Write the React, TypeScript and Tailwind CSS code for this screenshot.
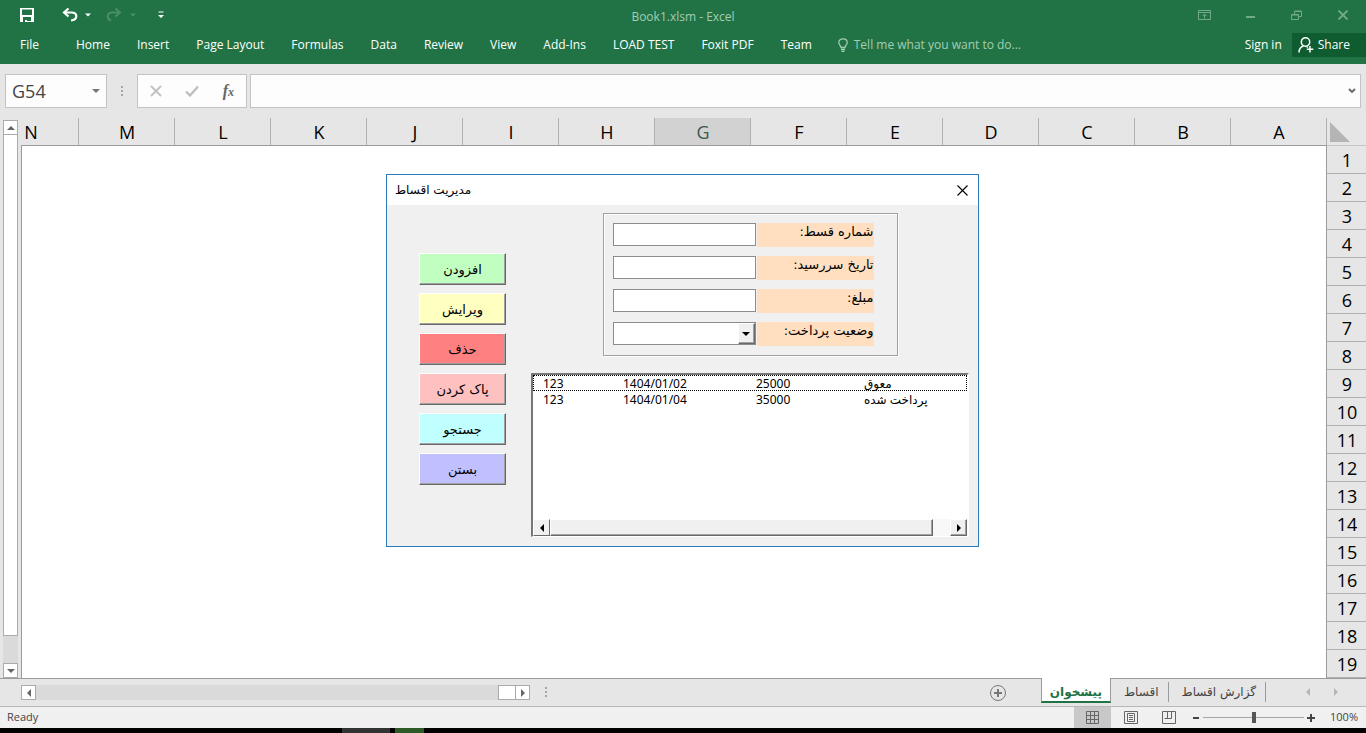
import { useState } from 'react';
import type { ReactNode } from 'react';
import clsx from 'clsx';

const MENU = ['Home', 'Insert', 'Page Layout', 'Formulas', 'Data', 'Review', 'View', 'Add-Ins', 'LOAD TEST', 'Foxit PDF', 'Team'];
const COLUMNS = ['N', 'M', 'L', 'K', 'J', 'I', 'H', 'G', 'F', 'E', 'D', 'C', 'B', 'A'];
const ROWS = Array.from({ length: 19 }, (_, i) => i + 1);
const SHEETS = ['پیشخوان', 'اقساط', 'گزارش اقساط'];

const ACTIONS = [
  { label: 'افزودن', color: 'bg-[#c0ffc0]' },
  { label: 'ویرایش', color: 'bg-[#ffffc0]' },
  { label: 'حذف', color: 'bg-[#ff8080]' },
  { label: 'پاک کردن', color: 'bg-[#ffc0c0]' },
  { label: 'جستجو', color: 'bg-[#c0ffff]' },
  { label: 'بستن', color: 'bg-[#c0c0ff]' },
];

const INSTALLMENTS = [
  { id: '123', due: '1404/01/02', amount: '25000', status: 'معوق' },
  { id: '123', due: '1404/01/04', amount: '35000', status: 'پرداخت شده' },
];

type Direction = 'up' | 'down' | 'left' | 'right';

const ARROWS: Record<Direction, string> = {
  up: 'M0 6 L4 2 L8 6 Z',
  down: 'M0 2 L8 2 L4 6 Z',
  left: 'M6 0 L6 8 L2 4 Z',
  right: 'M2 0 L6 4 L2 8 Z',
};

function Arrow({ dir, className }: { dir: Direction; className?: string }) {
  return (
    <svg viewBox="0 0 8 8" className={clsx('shrink-0 fill-current', className ?? 'size-2')} aria-hidden="true">
      <path d={ARROWS[dir]} />
    </svg>
  );
}

function Dots() {
  return (
    <svg viewBox="0 0 2 12" className="h-3 w-[2px] fill-[#a6a6a6]" aria-hidden="true">
      <rect width="2" height="2" y="1" />
      <rect width="2" height="2" y="5" />
      <rect width="2" height="2" y="9" />
    </svg>
  );
}

function TitleBar() {
  return (
    <div className="relative flex h-8 items-center justify-between">
      <div className="flex h-[30px] items-center self-start pl-5">
        <button aria-label="Save">
          <svg viewBox="0 0 14 14" className="size-[14px]">
            <path d="M0 0h14v14H0z M2 1.500v5.500h10V1.500z M3 9v5h2v-2h2v2h4V9z" fill="#fff" fillRule="evenodd" />
            <path d="M0 13h3v1H0z M7 13h7v1H7z" fill="#fff" />
          </svg>
        </button>
        <button aria-label="Undo" className="ml-7">
          <svg viewBox="0 0 16 14" className="h-[14px] w-4" fill="none" stroke="#fff" strokeWidth="2.200">
            <path d="M2 4.500h7.500c3 0 4.800 1.600 4.800 3.800 0 2.400-2.300 3.900-5.300 4.200" />
            <path d="M6.500 0.500 2 4.500l4.500 4" />
          </svg>
        </button>
        <Arrow dir="down" className="ml-[7px] size-[6px] text-white" />
        <button aria-label="Redo" className="ml-[15px]">
          <svg viewBox="0 0 16 14" className="h-[14px] w-4" fill="none" stroke="#4a8f68" strokeWidth="2">
            <path d="M14 4.500H6.500c-3 0-4.800 1.600-4.800 3.800 0 2.400 1.300 3.600 3.300 4.200" />
            <path d="M9.500 0.500l4.500 4-4.500 4" />
          </svg>
        </button>
        <Arrow dir="down" className="ml-2 size-[6px] text-[#4a8f68]" />
        <button aria-label="Customize Quick Access Toolbar" className="ml-[21px]">
          <svg viewBox="0 0 8 8" className="size-2 fill-white">
            <path d="M1.500 0.500h5v1h-5z M1 4h6L4 7z" />
          </svg>
        </button>
      </div>

      <h1 className="absolute left-1/2 top-[5px] -translate-x-1/2 text-xs leading-6 text-[#a3cdb3]">Book1.xlsm - Excel</h1>

      <div className="flex h-[30px] items-center gap-[35px] self-start pr-[17px] text-[#72a98a]">
        <button aria-label="Ribbon Display Options">
          <svg viewBox="0 0 13 10" className="h-[10px] w-[13px]" fill="none" stroke="currentColor">
            <path d="M.5.5h12v9H.500z M.5 2.500h12 M6.500 8.500v-4 M4.500 6l2-2 2 2" />
          </svg>
        </button>
        <button aria-label="Minimize">
          <svg viewBox="0 0 10 10" className="size-[10px]">
            <path d="M0 6h9v2H0z" fill="currentColor" />
          </svg>
        </button>
        <button aria-label="Restore">
          <svg viewBox="0 0 11 10" className="h-[10px] w-[11px]" fill="none" stroke="currentColor">
            <path d="M.5 4.500h7v5h-7z M.5 5h7 M3.500 4V1.500h7v5H8 M3.500 1h7" />
          </svg>
        </button>
        <button aria-label="Close">
          <svg viewBox="0 0 12 10" className="h-[10px] w-3" fill="none" stroke="currentColor" strokeWidth="1.800">
            <path d="M1.500.5l9 9 M10.500.5l-9 9" />
          </svg>
        </button>
      </div>
    </div>
  );
}

function Ribbon() {
  return (
    <nav className="flex h-8 items-start text-xs text-white">
      <button className="ml-5 mr-[37px] h-[26px]">File</button>
      <div className="flex gap-[27px]">
        {MENU.map((item) => (
          <button key={item} className="h-[26px] whitespace-nowrap">{item}</button>
        ))}
      </div>
      <button className="ml-[26px] flex h-[26px] items-center gap-[6px] whitespace-nowrap text-[#a3cdb3]">
        <svg viewBox="0 0 10 14" className="h-[14px] w-[10px]" fill="none" stroke="currentColor" strokeWidth="1.300">
          <path d="M3 9.500C3 7.500.8 7 .8 4.500.8 2.300 2.700.8 5 .8s4.200 1.500 4.200 3.700C9.200 7 7 7.500 7 9.500z M3 11.500h4 M3.500 13.300h3" />
        </svg>
        Tell me what you want to do...
      </button>
      <div className="ml-auto flex items-center">
        <button className="mr-[10px] h-[26px]">Sign in</button>
        <button className="flex h-6 items-center gap-1 bg-[#0e5c2f] pl-[6px] pr-4">
          <svg viewBox="0 0 16 16" className="size-4" fill="none" stroke="#fff" strokeWidth="1.500">
            <circle cx="7.500" cy="5" r="4.200" />
            <path d="M5.500 9C2.500 10 1 12.300 1 15.500 M8.500 9.500l1.500 1 M12 9v6.500 M8.800 12.300h6.500" />
          </svg>
          Share
        </button>
      </div>
    </nav>
  );
}

function FormulaBar() {
  return (
    <div className="flex items-center px-[5px] pb-[10px] pt-[10px]">
      <div className="flex h-[34px] w-[102px] items-center border border-[#c3c3c3] bg-[#fdfdfd] pr-[6px]">
        <input
          aria-label="Name Box"
          defaultValue="G54"
          className="w-full min-w-0 bg-transparent pl-[6px] text-lg text-[#444] outline-none"
        />
        <button aria-label="Show names" className="text-[#777]"><Arrow dir="down" /></button>
      </div>
      <div className="mx-[14px]"><Dots /></div>
      <div className="flex h-[34px] w-[110px] shrink-0 items-center justify-between border border-[#c3c3c3] bg-[#fdfdfd] pl-3 pr-[10px]">
        <button aria-label="Cancel">
          <svg viewBox="0 0 12 12" className="size-3" fill="none" stroke="#c0c0c0" strokeWidth="1.800">
            <path d="M1 1l10 10 M11 1L1 11" />
          </svg>
        </button>
        <button aria-label="Enter">
          <svg viewBox="0 0 14 12" className="h-3 w-[14px]" fill="none" stroke="#c0c0c0" strokeWidth="2.400">
            <path d="M1 6.500l4 4L13 1.500" />
          </svg>
        </button>
        <button aria-label="Insert Function" className="pr-[2px] font-['Liberation_Serif',serif] text-base font-bold italic leading-4 text-[#666]">
          f<span className="text-xs">x</span>
        </button>
      </div>
      <div className="ml-[3px] flex h-[34px] flex-1 items-center border border-[#c3c3c3] bg-[#fdfdfd] pr-1">
        <input aria-label="Formula Bar" className="h-full min-w-0 flex-1 bg-transparent px-2 outline-none" />
        <button aria-label="Expand Formula Bar">
          <svg viewBox="0 0 8 6" className="h-[6px] w-2" fill="none" stroke="#666" strokeWidth="1.800">
            <path d="M1 1l3 3 3-3" />
          </svg>
        </button>
      </div>
    </div>
  );
}

function ScrollButton({ dir, label }: { dir: Direction; label: string }) {
  return (
    <button aria-label={label} className="flex size-[15px] shrink-0 items-center justify-center border border-[#ababab] bg-white text-[#666]">
      <Arrow dir={dir} />
    </button>
  );
}

function VerticalScroll() {
  return (
    <div className="flex w-[21px] shrink-0 flex-col pl-[3px] pt-[2px]">
      <ScrollButton dir="up" label="Scroll up" />
      <div className="w-[15px] flex-1 border border-t-0 border-[#ababab] bg-white" />
      <div className="h-[27px] w-[15px] bg-[#dadada]" />
      <ScrollButton dir="down" label="Scroll down" />
    </div>
  );
}

function Sheet() {
  return (
    <div className="flex min-w-0 flex-1">
      <div className="flex min-w-0 flex-1 flex-col">
        <div className="flex h-7 justify-end overflow-hidden border-b border-[#9b9b9b]">
          {COLUMNS.map((col) => (
            <div
              key={col}
              className={clsx(
                'flex w-24 shrink-0 items-center justify-center border-r border-[#b1b1b1] pl-px text-lg leading-7',
                col === 'G' ? 'bg-[#d2d2d2] text-[#3d5a4b]' : 'text-black',
              )}
            >
              {col}
            </div>
          ))}
        </div>
        <div className="flex-1 border-x border-[#9b9b9b] bg-white" />
      </div>
      <div className="w-[39px] shrink-0">
        <div className="flex h-7 items-end border-b border-[#c6c6c6] pb-[3px] pl-[3px]">
          <svg viewBox="0 0 20 20" className="size-5 fill-[#b5b5b5]" aria-hidden="true">
            <path d="M0 0v20h20z" />
          </svg>
        </div>
        {ROWS.map((row) => (
          <div key={row} className="h-7 border-b border-[#b1b1b1] pl-px text-center text-lg leading-7 text-black">
            {row}
          </div>
        ))}
      </div>
    </div>
  );
}

function Field({ id, label, children }: { id: string; label: string; children: ReactNode }) {
  return (
    <div className="flex h-6 items-start gap-px">
      {children}
      <label htmlFor={id} dir="rtl" className="h-6 w-[117px] bg-[#ffdfc0] text-right text-[13px] leading-[18px]">
        {label}
      </label>
    </div>
  );
}

const FIELD_BOX = 'h-[23px] w-[143px] border border-[#8c8c8c] bg-white';
const RAISED = 'border border-b-[#696969] border-l-white border-r-[#696969] border-t-white';

function ListScroll() {
  return (
    <div className="flex h-[17px] bg-[#f8f8f8]">
      <button aria-label="Scroll list left" className={clsx('flex w-[17px] items-center justify-center bg-[#f0f0f0]', RAISED)}>
        <Arrow dir="left" />
      </button>
      <div className={clsx('flex-1 bg-[#f0f0f0] shadow-[inset_-1px_-1px_0_#a0a0a0]', RAISED)} />
      <button aria-label="Scroll list right" className={clsx('ml-[17px] flex w-[17px] items-center justify-center bg-[#f0f0f0] shadow-[inset_-1px_-1px_0_#a0a0a0]', RAISED)}>
        <Arrow dir="right" />
      </button>
    </div>
  );
}

function InstallmentList() {
  const [selected, setSelected] = useState(0);

  return (
    <div className="mt-[17px] flex h-[164px] flex-col justify-between border-b border-l-2 border-r-2 border-t-2 border-b-white border-l-[#777] border-r-white border-t-[#777] bg-white">
      <table className="w-full table-fixed border-collapse text-left font-['Noto_Sans','DejaVu_Sans',sans-serif] text-xs">
        <tbody>
          {INSTALLMENTS.map((item, i) => (
            <tr
              key={item.due}
              onClick={() => setSelected(i)}
              className={clsx('h-4 leading-[14px] *:pt-[2px]', i === selected && 'outline-1 -outline-offset-1 outline-dotted outline-black')}
            >
              <td className="w-[90px] pl-[10px]">{item.id}</td>
              <td className="w-[133px]">{item.due}</td>
              <td className="w-[108px]">{item.amount}</td>
              <td>{item.status}</td>
            </tr>
          ))}
        </tbody>
      </table>
      <ListScroll />
    </div>
  );
}

function InstallmentDialog() {
  return (
    <section
      role="dialog"
      aria-labelledby="dialog-title"
      className="w-[593px] border border-[#2a7ab8] bg-[#f0f0f0] font-['DejaVu_Sans',sans-serif] text-black"
    >
      <header className="flex h-[30px] items-center justify-between bg-white pl-2 pr-[10px]">
        <h2 id="dialog-title" dir="rtl" className="text-xs">مدیریت اقساط</h2>
        <button aria-label="Close dialog">
          <svg viewBox="0 0 11 11" className="size-[11px]" stroke="#000" strokeWidth="1.100">
            <path d="M.5.5l10 10 M10.500.5l-10 10" />
          </svg>
        </button>
      </header>

      <div className="flex justify-between pb-[9px] pl-8 pr-[9px] pt-2">
        <div className="flex w-[87px] flex-col gap-2 pt-10">
          {ACTIONS.map(({ label, color }) => (
            <button key={label} className={clsx('h-8 pt-[2px] text-[13px] shadow-[inset_-1px_-1px_0_#a0a0a0]', RAISED, color)}>
              {label}
            </button>
          ))}
        </div>

        <div className="w-[438px]">
          <div className="mx-auto flex w-[295px] flex-col gap-[9px] border border-[#a0a0a0] py-[9px] pl-[9px] shadow-[inset_1px_1px_0_#fff,1px_1px_0_#fff]">
            <Field id="number" label="شماره قسط:">
              <input id="number" className={FIELD_BOX} />
            </Field>
            <Field id="due" label="تاریخ سررسید:">
              <input id="due" className={FIELD_BOX} />
            </Field>
            <Field id="amount" label="مبلغ:">
              <input id="amount" className={FIELD_BOX} />
            </Field>
            <Field id="status" label="وضعیت پرداخت:">
              <div className="relative">
                <select id="status" className={clsx('block appearance-none pl-1 text-xs', FIELD_BOX)}>
                  <option value=""></option>
                  <option>معوق</option>
                  <option>پرداخت شده</option>
                </select>
                <span className={clsx('pointer-events-none absolute inset-y-px right-px flex w-[17px] items-center justify-center bg-[#f0f0f0] shadow-[inset_-1px_-1px_0_#a0a0a0]', RAISED)}>
                  <Arrow dir="down" />
                </span>
              </div>
            </Field>
          </div>
          <InstallmentList />
        </div>
      </div>
    </section>
  );
}

function SheetTabs() {
  const [active, setActive] = useState(SHEETS[0]);

  return (
    <div className="flex h-7 shrink-0 border-t border-[#9b9b9b] pl-[21px]">
      <div className="mr-[15px] mt-[6px] flex h-[15px] w-[509px] bg-[#dadada]">
        <ScrollButton dir="left" label="Scroll left" />
        <div className="ml-auto w-[17px] border border-r-0 border-[#ababab] bg-white" />
        <ScrollButton dir="right" label="Scroll right" />
      </div>
      <div className="mt-[7px]"><Dots /></div>
      <button aria-label="New sheet" className="ml-auto mr-[34px] flex items-center">
        <svg viewBox="0 0 18 18" className="size-[18px]" fill="none" stroke="#777">
          <circle cx="9" cy="9" r="7.500" />
          <path d="M5 9h8 M9 5v8" strokeWidth="2" />
        </svg>
      </button>
      <div className="flex items-start font-['DejaVu_Sans',sans-serif] text-xs text-[#444]">
        {SHEETS.map((name) => (
          <button
            key={name}
            onClick={() => setActive(name)}
            className={clsx(
              'whitespace-nowrap',
              name === active
                ? '-mt-px h-[25px] border-x border-b-2 border-x-[#9b9b9b] border-b-[#217346] bg-white px-2 pt-1 font-bold text-[#217346]'
                : 'mt-[3px] h-5 border-r border-[#9b9b9b] pl-[13px] pr-[9px]',
            )}
          >
            {name}
          </button>
        ))}
      </div>
      <div className="flex items-center gap-5 pb-px pl-[38px] pr-[26px] text-[#b5b5b5]">
        <button aria-label="Previous sheet"><Arrow dir="left" /></button>
        <button aria-label="Next sheet"><Arrow dir="right" /></button>
      </div>
    </div>
  );
}

function StatusBar() {
  return (
    <footer className="flex h-[22px] shrink-0 items-center border-t border-[#b8b8b8] bg-[#f0f0f0] text-[11px] text-[#444]">
      <span className="pl-[7px]">Ready</span>
      <div className="ml-auto flex h-full text-[#666]">
        <button aria-label="Normal" className="flex w-[37px] items-center justify-center bg-[#c8c8c8]">
          <svg viewBox="0 0 13 13" className="size-[13px]" fill="none" stroke="currentColor">
            <path d="M.5.500h12v12H.500z M4.500.5v12 M8.500.5v12 M.5 4.500h12 M.5 8.500h12" />
          </svg>
        </button>
        <button aria-label="Page Layout" className="flex w-[39px] items-center justify-center">
          <svg viewBox="0 0 14 13" className="h-[13px] w-[14px]" fill="none" stroke="currentColor">
            <path d="M.5.500h13v12H.500z M3.500 2.500h7v8h-7z M5 4.500h4 M5 6.500h4 M5 8.500h4" />
          </svg>
        </button>
        <button aria-label="Page Break Preview" className="flex w-[37px] items-center justify-center">
          <svg viewBox="0 0 14 13" className="h-[13px] w-[14px]" fill="none" stroke="currentColor">
            <path d="M.5.500h13v12H.500z M2.500 7.500h7V.5 M5.500.5v7" />
          </svg>
        </button>
      </div>
      <button aria-label="Zoom out" className="ml-[5px]">
        <svg viewBox="0 0 8 8" className="size-2" fill="#444"><path d="M1 3h6v2H1z" /></svg>
      </button>
      <input
        type="range"
        aria-label="Zoom"
        defaultValue={50}
        className="mx-[3px] h-px w-[101px] appearance-none bg-[#a6a6a6] [&::-webkit-slider-thumb]:h-[11px] [&::-webkit-slider-thumb]:w-1 [&::-webkit-slider-thumb]:appearance-none [&::-webkit-slider-thumb]:bg-[#555]"
      />
      <button aria-label="Zoom in">
        <svg viewBox="0 0 8 8" className="size-2" fill="#444"><path d="M0 3h8v2H0z M3 0h2v8H3z" /></svg>
      </button>
      <span className="w-[51px] pr-2 text-right">100%</span>
    </footer>
  );
}

export default function App() {
  return (
    <div className="flex h-screen flex-col overflow-hidden bg-[#e6e6e6] font-['Open_Sans','DejaVu_Sans',sans-serif]">
      <div className="shrink-0 bg-[#217346]">
        <TitleBar />
        <Ribbon />
      </div>
      <FormulaBar />
      <main className="relative flex min-h-0 flex-1">
        <VerticalScroll />
        <Sheet />
        <div className="absolute inset-x-0 top-14 flex justify-center pr-px">
          <InstallmentDialog />
        </div>
      </main>
      <SheetTabs />
      <StatusBar />
      <div className="flex h-[5px] shrink-0 gap-[5px] bg-black pl-[342px]">
        <div className="w-12 bg-[#333]" />
        <div className="w-[29px] bg-[#2d5a27]" />
      </div>
    </div>
  );
}
